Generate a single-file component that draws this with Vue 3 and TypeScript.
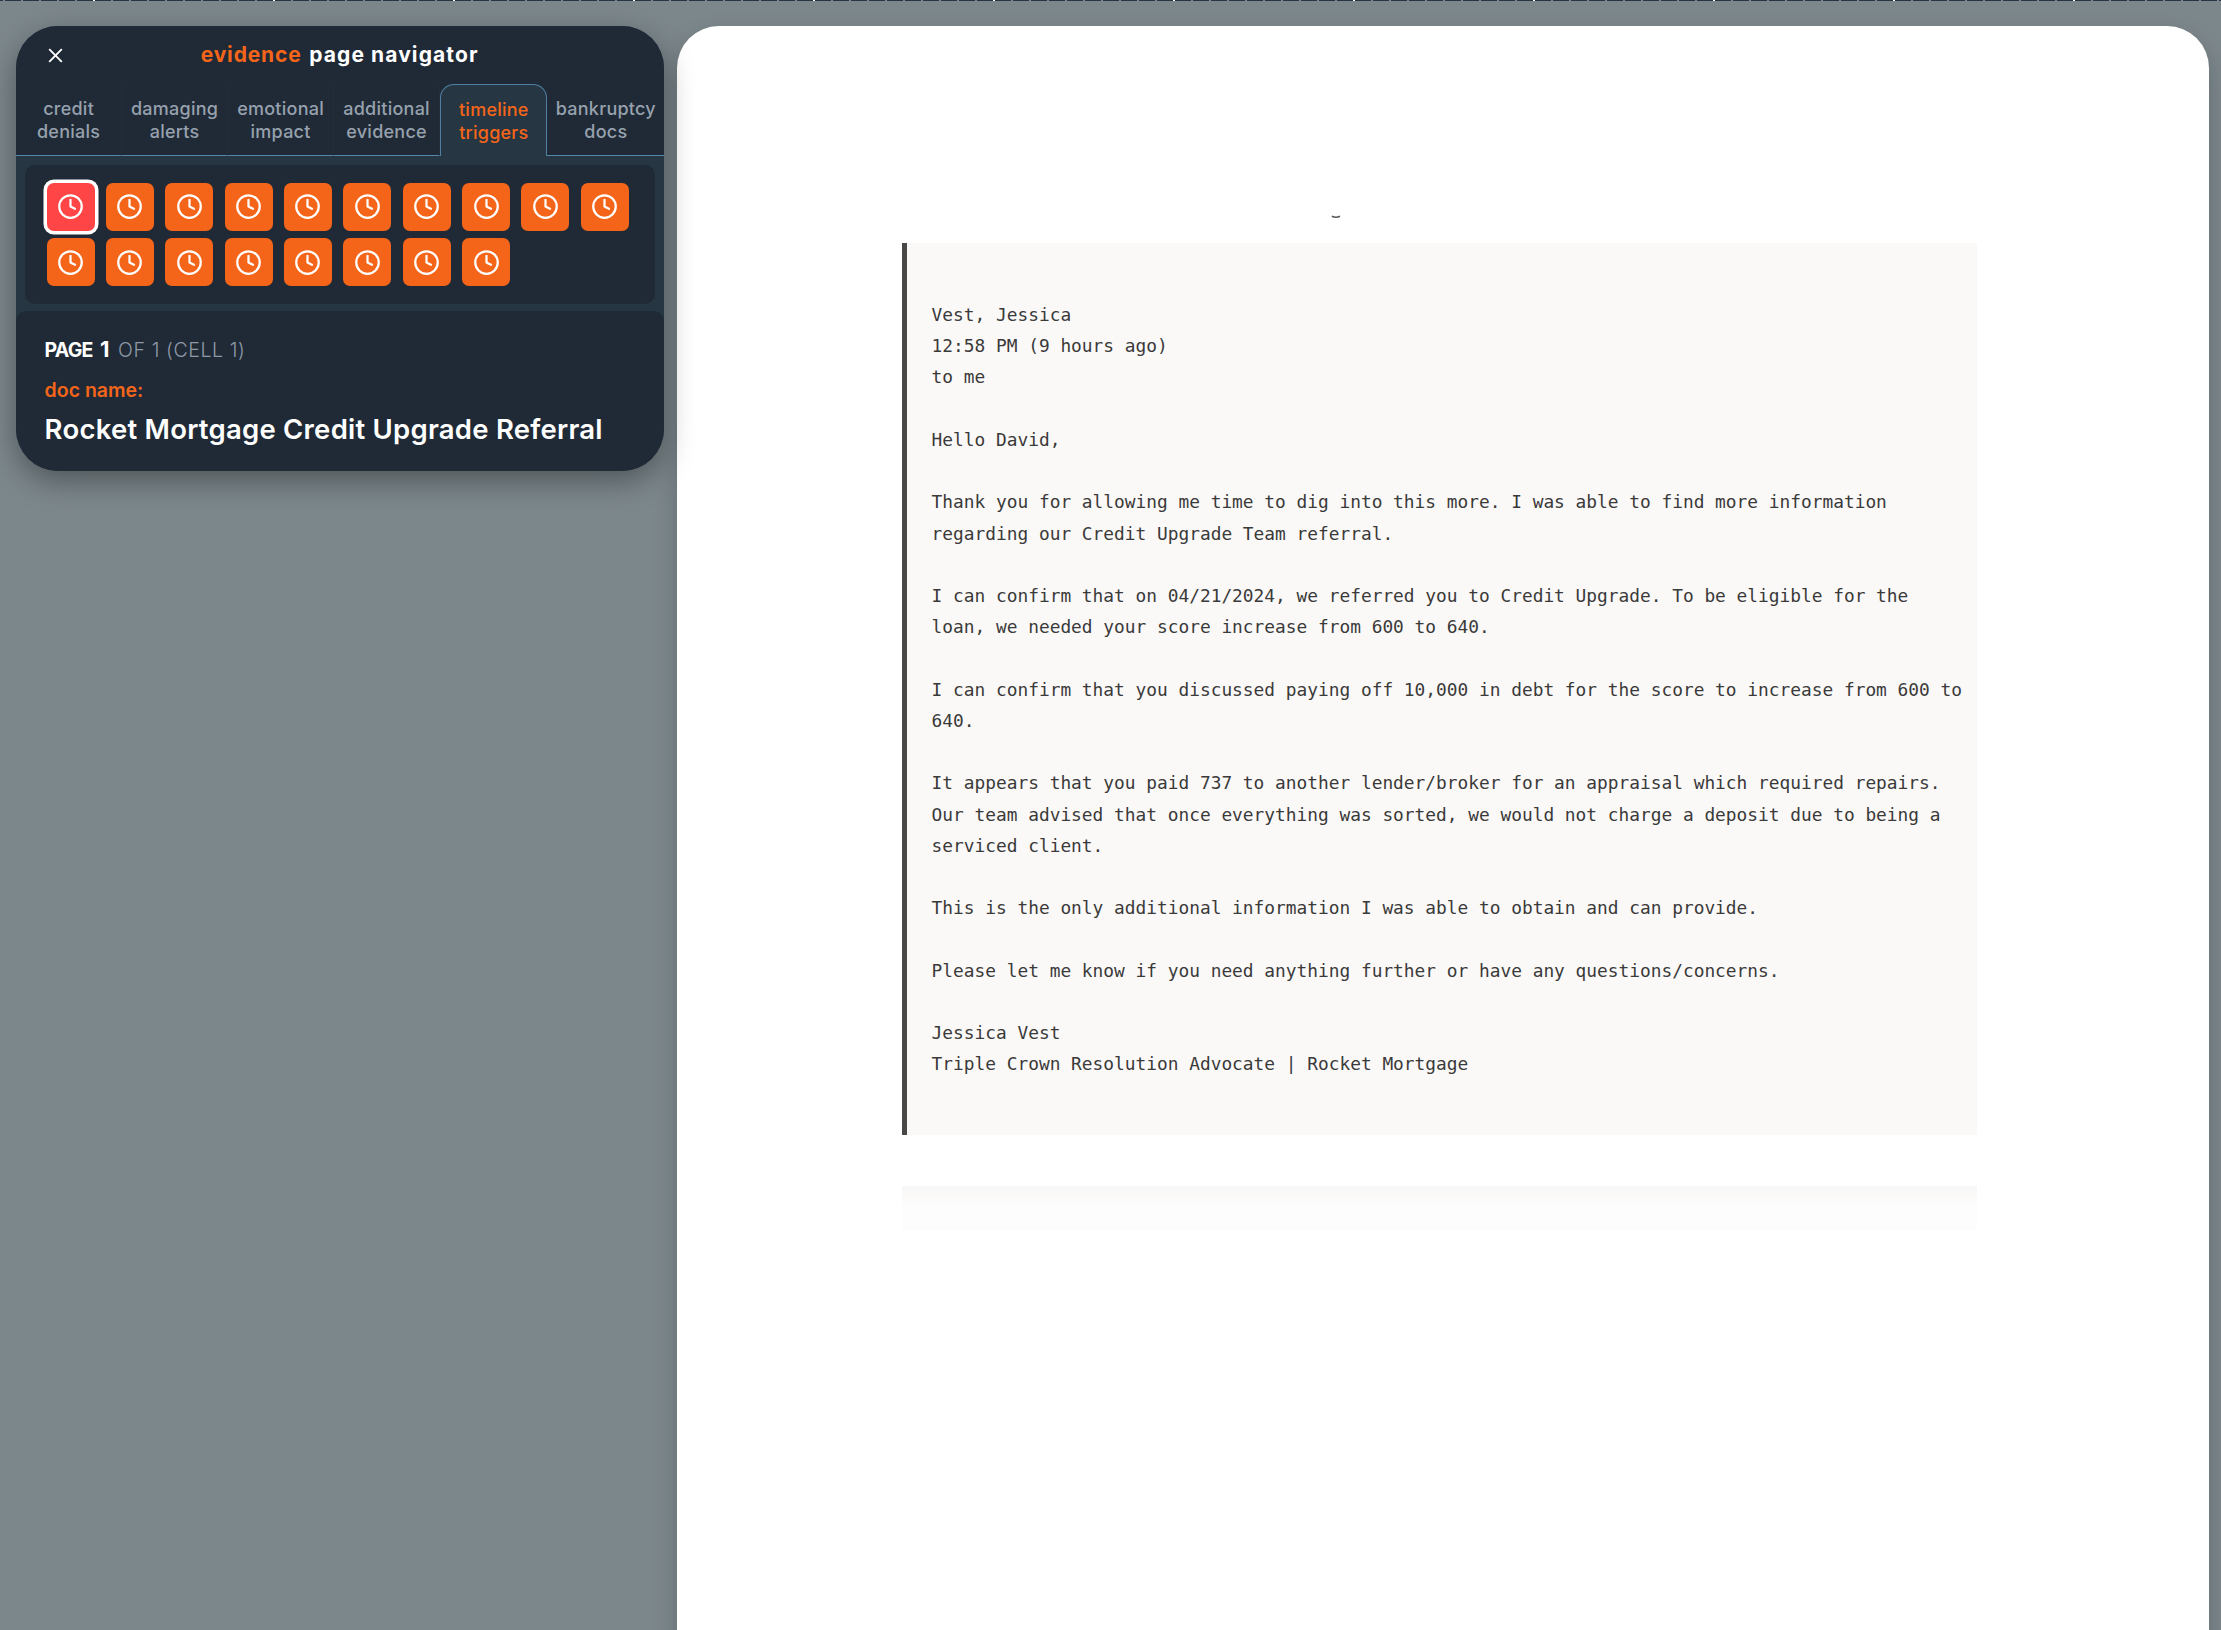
<script setup lang="ts">
interface Tab {
  top: string
  bottom: string
  active?: boolean
}

const tabs: Tab[] = [
  { top: 'credit', bottom: 'denials' },
  { top: 'damaging', bottom: 'alerts' },
  { top: 'emotional', bottom: 'impact' },
  { top: 'additional', bottom: 'evidence' },
  { top: 'timeline', bottom: 'triggers', active: true },
  { top: 'bankruptcy', bottom: 'docs' },
]

const cellCount = 18

const letter = `Vest, Jessica
12:58 PM (9 hours ago)
to me

Hello David,

Thank you for allowing me time to dig into this more. I was able to find more information
regarding our Credit Upgrade Team referral.

I can confirm that on 04/21/2024, we referred you to Credit Upgrade. To be eligible for the
loan, we needed your score increase from 600 to 640.

I can confirm that you discussed paying off 10,000 in debt for the score to increase from 600 to
640.

It appears that you paid 737 to another lender/broker for an appraisal which required repairs.
Our team advised that once everything was sorted, we would not charge a deposit due to being a
serviced client.

This is the only additional information I was able to obtain and can provide.

Please let me know if you need anything further or have any questions/concerns.

Jessica Vest
Triple Crown Resolution Advocate | Rocket Mortgage`
</script>

<template>
  <div class="page">
    <div class="ticks"></div>
    <div class="layout">
      <aside class="navigator">
        <header class="head">
          <button class="close" aria-label="Close">
            <svg width="15" height="15" viewBox="0 0 15 15" fill="none" stroke="#fff" stroke-width="1.9">
              <path d="M1.2 1.2 13.8 13.8M13.8 1.2 1.2 13.8" />
            </svg>
          </button>
          <h1 class="title"><span class="accent">evidence</span> <span class="rest">page navigator</span></h1>
        </header>
        <nav class="tabs">
          <div v-for="t in tabs" :key="t.top" class="tab" :class="[t.top, { active: t.active }]">
            <span>{{ t.top }}</span>
            <span class="second">{{ t.bottom }}</span>
          </div>
        </nav>
        <section class="tray">
          <div class="grid">
            <div v-for="n in cellCount" :key="n" class="cell" :class="{ selected: n === 1 }">
              <svg width="27" height="27" viewBox="0 0 24 24" fill="none" stroke="#fff" stroke-width="2" stroke-linecap="round" stroke-linejoin="round">
                <circle cx="12" cy="12" r="10" />
                <path d="M12 6v6l4 2" />
              </svg>
            </div>
          </div>
        </section>
        <footer class="info">
          <div class="count"><b class="pg">PAGE</b><b class="num">1</b><span class="of">OF 1 (CELL 1)</span></div>
          <div class="label">doc name:</div>
          <div class="doc">Rocket Mortgage Credit Upgrade Referral</div>
        </footer>
      </aside>
      <main class="sheet">
        <svg class="mark" width="12" height="5" viewBox="0 0 12 5" fill="none" stroke="#555" stroke-width="1.5">
          <path d="M1.8 1.3Q6 3.2 10 1.3" />
        </svg>
        <pre class="letter">{{ letter }}</pre>
        <div class="fade"></div>
      </main>
    </div>
  </div>
</template>

<style>
body {
  background: #7c878c;
  overflow: hidden;
}
</style>

<style scoped>
.page {
  height: 1630px;
  overflow: hidden;
  background: #7c878c;
  font-family: Inter, sans-serif;
}
.ticks {
  height: 1px;
  background:
    repeating-linear-gradient(90deg, transparent 0 93px, #fff 93px 95px, transparent 95px 180px),
    repeating-linear-gradient(90deg, #263543 0 3px, #7c878c 3px 5px, #263543 5px 18px);
}
.layout {
  display: flex;
  align-items: flex-start;
  padding: 25px 0 0 15.6px;
}
.navigator {
  position: relative;
  z-index: 1;
  box-sizing: border-box;
  width: 648px;
  height: 445px;
  flex: none;
  display: flex;
  flex-direction: column;
  border-radius: 42px;
  overflow: hidden;
  background: #263642;
  box-shadow: 0 10px 30px rgba(0, 0, 0, 0.36);
}
.head {
  height: 58px;
  flex: none;
  display: flex;
  align-items: center;
  background: #1f2a36;
}
.close {
  display: flex;
  margin: 0 0 0 32.5px;
  padding: 0;
  border: 0;
  background: none;
}
.title {
  margin: 0 0 0 137.6px;
  display: flex;
  font-size: 21px;
  line-height: 26px;
  font-weight: 700;
  color: #fff;
  white-space: nowrap;
}
.accent {
  width: 108.5px;
  color: #f4651a;
  letter-spacing: 0.85px;
}
.rest {
  letter-spacing: 1.1px;
}
.tabs {
  height: 72px;
  flex: none;
  display: flex;
  background: #1f2a36;
}
.tab {
  box-sizing: border-box;
  width: 106px;
  flex: none;
  display: flex;
  flex-direction: column;
  align-items: center;
  padding: 12.5px 0 0 1px;
  border-bottom: 1px solid #5587ab;
  border-right: 1px solid #222d39;
  font-size: 18px;
  line-height: 23px;
  font-weight: 500;
  letter-spacing: 0.25px;
  color: #97a1ae;
  white-space: nowrap;
}
.tab.bankruptcy {
  flex: 1;
  border-right: 0;
}
.tab.active {
  width: 107.5px;
  border: 1px solid #4f7fa2;
  border-bottom: 0;
  border-radius: 14px 14px 0 0;
  background: #263642;
  color: #f4651a;
}
.tray {
  padding: 9px 9px 7px;
}
.grid {
  box-sizing: border-box;
  height: 139px;
  padding: 18px 0 0 22px;
  display: grid;
  grid-template-columns: repeat(10, 48px);
  grid-auto-rows: 48px;
  gap: 7px 11.35px;
  border-radius: 10px;
  background: #1f2a36;
}
.cell {
  display: flex;
  align-items: center;
  justify-content: center;
  border-radius: 7px;
  background: #f4651a;
}
.cell.selected {
  background: #ff4545;
  box-shadow: 0 0 0 3.5px #fff;
}
.cell:nth-child(-n + 10) svg {
  margin-top: -1px;
}
.info {
  flex: 1;
  padding: 25px 0 0 29px;
  border-radius: 10px 10px 0 0;
  background: #1f2a36;
  white-space: nowrap;
}
.count {
  display: flex;
  align-items: baseline;
  font-size: 19.5px;
  line-height: 26px;
  color: #fff;
}
.pg {
  width: 55.5px;
  letter-spacing: -0.8px;
}
.num {
  width: 18px;
  font-size: 22px;
  line-height: 26px;
}
.of {
  color: #8f99a6;
  font-weight: 300;
  letter-spacing: 0.6px;
}
.label {
  margin-top: 14px;
  font-size: 19.5px;
  line-height: 26px;
  font-weight: 600;
  color: #f4651a;
}
.doc {
  margin-top: 8px;
  font-size: 27.5px;
  line-height: 36px;
  font-weight: 600;
  letter-spacing: 0.24px;
  color: #fff;
}
.sheet {
  box-sizing: border-box;
  width: 1531.5px;
  height: 1660px;
  margin-left: 13.7px;
  flex: none;
  padding: 189px 0 0 224.3px;
  border-radius: 42px;
  background: #fff;
  box-shadow: 0 10px 25px rgba(0, 0, 0, 0.2);
}
.mark {
  display: block;
  margin: 0 0 23px 428px;
}
.letter {
  box-sizing: border-box;
  width: 1075px;
  height: 892px;
  margin: 0;
  padding: 56px 0 0 25px;
  border-left: 5px solid #484848;
  background: #faf9f8;
  color: #3a3a3a;
  font: 17.83px/31.22px "DejaVu Sans Mono", monospace;
}
.fade {
  width: 1075px;
  height: 44px;
  margin-top: 51px;
  background: linear-gradient(#f7f7f7 0, #faf9f8 8px, #fcfcfb 16px, #fdfdfd 17px 44px);
}
</style>
